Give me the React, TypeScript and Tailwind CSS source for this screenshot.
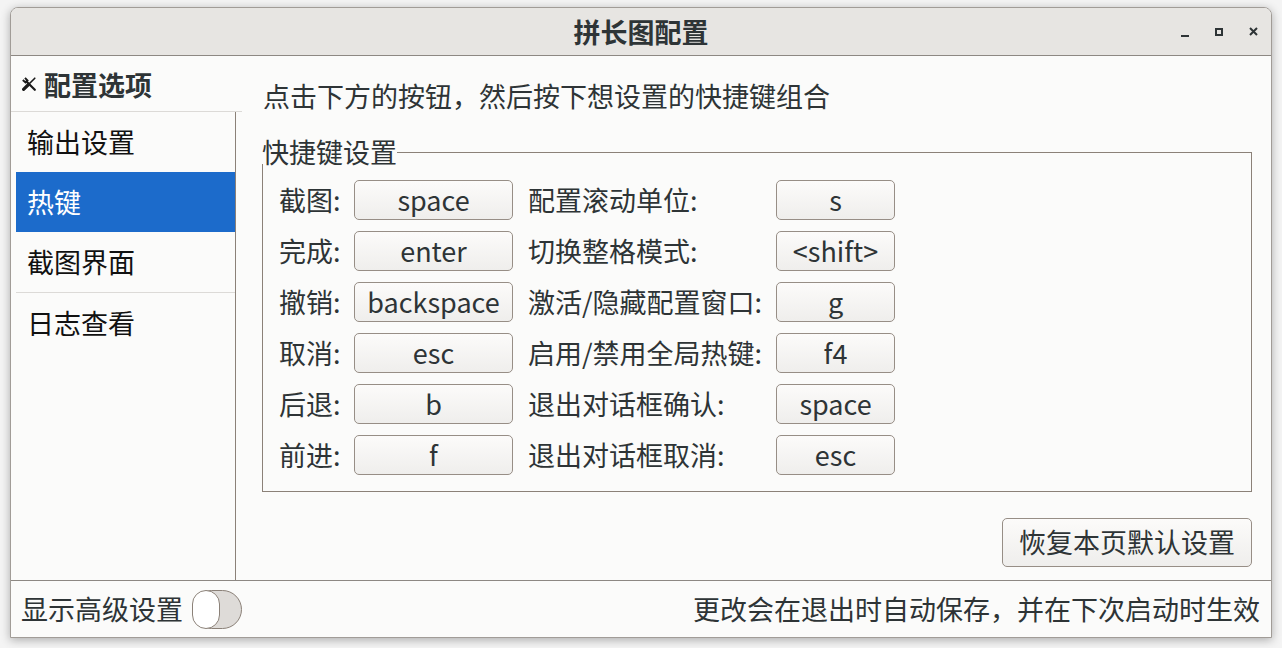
import React from "react";

const FONT = { fontFamily: '"Noto Sans CJK SC", "Noto Sans", sans-serif' };

const rows: [string, string, string, string][] = [
  ["截图:", "space", "配置滚动单位:", "s"],
  ["完成:", "enter", "切换整格模式:", "<shift>"],
  ["撤销:", "backspace", "激活/隐藏配置窗口:", "g"],
  ["取消:", "esc", "启用/禁用全局热键:", "f4"],
  ["后退:", "b", "退出对话框确认:", "space"],
  ["前进:", "f", "退出对话框取消:", "esc"],
];

const navItems = ["输出设置", "热键", "截图界面", "日志查看"];

function KeyButton({ label, width }: { label: string; width: string }) {
  return (
    <div
      className={`${width} h-[40px] flex items-center justify-center rounded-[5px] border border-[#978e86] bg-gradient-to-b from-[#fcfbfa] to-[#efeeec] leading-none text-[#2e3436]`}
    >
      <span className="-mt-[2px]">{label}</span>
    </div>
  );
}

function ToolsIcon() {
  return (
    <svg width="14" height="14" viewBox="0 0 14 14" fill="none" stroke="#1a1a1a">
      {/* wrench: open jaw top-left, shaft to bottom-right */}
      <path d="M0.8 3 L3.5 5.5 L5.5 3.5 L3 0.8" strokeWidth="1.9" strokeLinejoin="miter" />
      <path d="M4.5 4.5 L12.8 12.8" strokeWidth="2.2" strokeLinecap="round" />
      {/* screwdriver: tip top-right, handle bottom-left */}
      <path d="M12.8 1.2 L7 7" strokeWidth="1.6" strokeLinecap="round" />
      <path d="M6.5 7.5 L1.6 12.4" strokeWidth="3.2" strokeLinecap="round" />
    </svg>
  );
}

export default function App() {
  return (
    <div className="w-[1282px] h-[648px] bg-[#f4f4f4] pt-[7px] pl-[10px] overflow-hidden" style={FONT}>
      <div className="w-[1262px] h-[631px] flex flex-col rounded-t-[8px] border border-[#a19c97] bg-[#fbfbfa] shadow-[0_2px_10px_rgba(0,0,0,0.3)] text-[27px] text-[#2e3436] overflow-hidden">
        {/* Title bar */}
        <div className="relative h-[48px] shrink-0 flex items-center justify-center bg-[#e7e5e2] border-b border-[#8d8883]">
          <span className="font-bold leading-none -mt-[1px] text-[#2e3436]">拼长图配置</span>
          <div className="absolute right-[13px] top-0 h-full flex items-center gap-[26px]">
            <svg width="8" height="8" viewBox="0 0 8 8" className="mt-[3px]">
              <rect x="0" y="6" width="8" height="2" fill="#2e3436" />
            </svg>
            <svg width="8" height="8" viewBox="0 0 8 8">
              <rect x="1" y="1" width="6" height="6" fill="none" stroke="#2e3436" strokeWidth="2" />
            </svg>
            <svg width="9" height="9" viewBox="0 0 9 9">
              <path d="M1 1 L8 8 M8 1 L1 8" stroke="#2e3436" strokeWidth="2" />
            </svg>
          </div>
        </div>

        {/* Body */}
        <div className="flex-1 flex min-h-0">
          {/* Sidebar */}
          <div className="w-[231px] shrink-0 flex flex-col">
            <div className="h-[56px] shrink-0 flex items-center gap-[8px] pl-[11px] border-b border-[#dcdad7]">
              <ToolsIcon />
              <span className="font-bold leading-none mt-[2px]">配置选项</span>
            </div>
            <div className="flex-1 ml-[5px] mr-[6px] border-r border-[#8b8178] flex flex-col">
              {navItems.map((item, i) => (
                <div
                  key={item}
                  className={`h-[60px] shrink-0 flex items-center pl-[11px] leading-none ${
                    i === 1 ? "bg-[#1c6bcb] text-white h-[59px]" : "text-[#111]"
                  } ${i === 3 ? "border-t border-[#dcdad7]" : ""}`}
                >
                  <span className="-mt-[1px]">{item}</span>
                </div>
              ))}
            </div>
          </div>

          {/* Content */}
          <div className="flex-1 flex flex-col pl-[21px] pr-[19px] pt-[25px] pb-[15px]">
            <div className="h-[30px] leading-[30px] whitespace-nowrap text-[#2e3436]">点击下方的按钮，然后按下想设置的快捷键组合</div>

            <div className="mt-[29px] flex flex-col">
              <div className="h-[24px] flex">
                <span className="leading-[24px] -ml-px whitespace-nowrap">快捷键设置</span>
                <div className="flex-1 mt-[12px] border-t border-r border-[#8b8178]" />
              </div>
              <div className="h-[328px] -ml-px border-l border-r border-b border-[#8b8178] pl-[16px] pt-[16px]">
                <div className="grid grid-cols-[60px_159px_233px_119px] gap-x-[15px] gap-y-[11px] items-center w-fit">
                  {rows.map(([l1, k1, l2, k2]) => (
                    <React.Fragment key={l1}>
                      <span className="leading-none -mt-[2px] whitespace-nowrap">{l1}</span>
                      <KeyButton label={k1} width="w-[159px]" />
                      <span className="leading-none -mt-[2px] whitespace-nowrap">{l2}</span>
                      <KeyButton label={k2} width="w-[119px]" />
                    </React.Fragment>
                  ))}
                </div>
              </div>
            </div>

            <div className="mt-[26px] flex justify-end">
              <div className="w-[250px] h-[49px] flex items-center justify-center rounded-[5px] border border-[#978e86] bg-gradient-to-b from-[#fcfbfa] to-[#efeeec] leading-none">
                <span className="-mt-[2px] whitespace-nowrap">恢复本页默认设置</span>
              </div>
            </div>
          </div>
        </div>

        {/* Footer */}
        <div className="h-[57px] shrink-0 border-t border-[#8d8883] flex items-center justify-between pl-[10px] pr-[11px]">
          <div className="flex items-center gap-[9px]">
            <span className="leading-none -mt-[2px] whitespace-nowrap">显示高级设置</span>
            <div className="w-[50px] h-[39px] rounded-full border border-[#8b8178] bg-[#dedbd8] flex">
              <div className="w-[26px] h-full -ml-px -my-px box-content rounded-full border border-[#8b8178] bg-white" />
            </div>
          </div>
          <span className="leading-none -mt-[2px] whitespace-nowrap">更改会在退出时自动保存，并在下次启动时生效</span>
        </div>
      </div>
    </div>
  );
}
